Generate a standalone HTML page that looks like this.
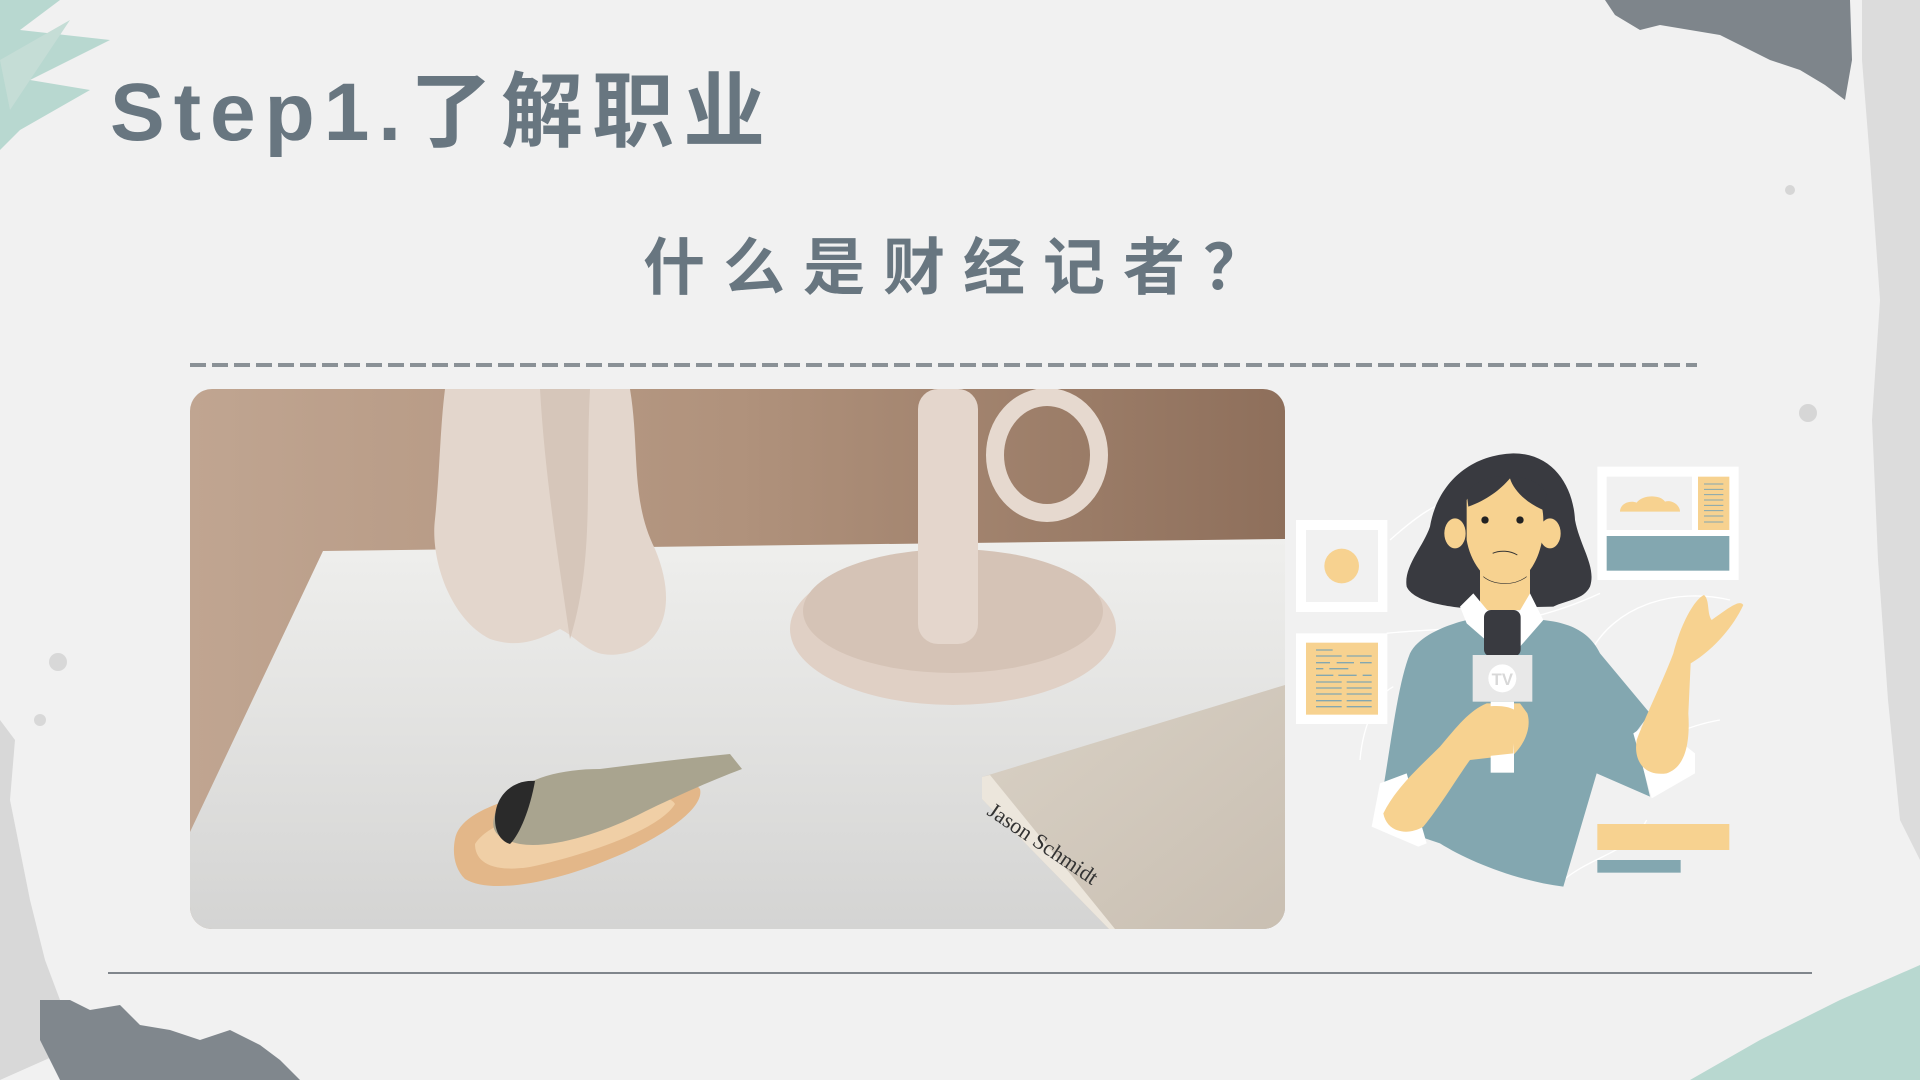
<!DOCTYPE html>
<html><head><meta charset="utf-8"><style>
html,body{margin:0;padding:0}
body{width:1920px;height:1080px;background:#f1f1f1;position:relative;overflow:hidden;font-family:"Liberation Sans","Noto Sans CJK SC",sans-serif}
.abs{position:absolute}
#title{left:110px;top:58px;font-size:82px;font-weight:bold;letter-spacing:9px;color:#687680;white-space:nowrap;line-height:110px}
#sub{left:643px;top:222px;font-size:62px;font-weight:bold;letter-spacing:18px;color:#687680;white-space:nowrap;line-height:80px;font-family:"Noto Sans CJK SC",sans-serif}
#dash{left:190px;top:363px;width:1507px;height:4px;background:repeating-linear-gradient(90deg,#8a9196 0 16px,transparent 16px 22px)}
#line{left:108px;top:972px;width:1704px;height:2px;background:#80868c}
#photo{left:190px;top:389px;width:1095px;height:540px;border-radius:22px;overflow:hidden}
</style></head><body>
<svg class="abs" style="left:0;top:0" width="1920" height="1080" viewBox="0 0 1920 1080">
  <path d="M0,0 L60,0 L20,30 L110,40 L30,80 L90,90 L20,130 L0,150Z" fill="#b8d8d0"/>
  <path d="M0,60 L70,20 L10,110Z" fill="#c5ddd6"/>
  <path d="M1862,0 L1920,0 L1920,860 L1900,820 L1888,700 L1878,560 L1872,420 L1880,300 L1870,160 L1862,60Z" fill="#dcdcdc"/>
  <path d="M1605,0 L1850,0 L1852,60 L1845,100 L1825,85 L1800,70 L1770,60 L1740,45 L1720,35 L1690,30 L1660,25 L1640,30 L1615,15Z" fill="#7e858b"/>
  <circle cx="1808" cy="413" r="9" fill="#d6d6d6"/>
  <circle cx="1790" cy="190" r="5" fill="#d6d6d6"/>
  <path d="M0,720 L15,740 L10,800 L20,850 L30,900 L45,960 L60,1000 L90,1040 L0,1080Z" fill="#d8d8d8"/>
  <circle cx="58" cy="662" r="9" fill="#d8d8d8"/>
  <circle cx="40" cy="720" r="6" fill="#d8d8d8"/>
  <path d="M40,1000 L70,1000 L90,1010 L120,1005 L140,1025 L170,1030 L200,1040 L230,1030 L260,1045 L280,1060 L300,1080 L60,1080 L40,1040Z" fill="#80878d"/>
  <path d="M1690,1080 L1760,1040 L1840,1000 L1920,965 L1920,1080Z" fill="#b8d8d0"/>
</svg>

<div id="title" class="abs">Step1.了解职业</div>
<div id="sub" class="abs">什么是财经记者？</div>
<div id="dash" class="abs"></div>

<div id="photo" class="abs">
<svg width="1095" height="540" viewBox="0 0 1095 540">
  <defs>
    <linearGradient id="wall" x1="0" y1="0" x2="1" y2="0">
      <stop offset="0" stop-color="#c0a591"/><stop offset="0.5" stop-color="#b0927c"/><stop offset="1" stop-color="#8e6f5b"/>
    </linearGradient>
    <linearGradient id="tab" x1="0" y1="0" x2="0" y2="1">
      <stop offset="0" stop-color="#efefed"/><stop offset="1" stop-color="#d4d4d3"/>
    </linearGradient>
    <linearGradient id="book" x1="0" y1="0" x2="1" y2="1">
      <stop offset="0" stop-color="#d9d1c5"/><stop offset="1" stop-color="#c9bfb2"/>
    </linearGradient>
  </defs>
  <rect width="1095" height="540" fill="url(#wall)"/>
  <path d="M133,162 L1095,150 L1095,540 L0,540 L0,443Z" fill="url(#tab)"/>
  <path d="M255,0 L440,0 C450,60 440,110 465,160 C490,220 470,260 430,265 C400,270 390,250 370,240 C350,250 330,260 300,250 C260,230 240,170 245,130 C250,80 250,40 255,0Z" fill="#e3d6cc"/>
  <path d="M350,0 L400,0 C395,90 405,170 380,250 C370,180 355,90 350,0Z" fill="#d6c6ba"/>
  <ellipse cx="763" cy="240" rx="163" ry="76" fill="#e0d0c5"/>
  <ellipse cx="763" cy="222" rx="150" ry="62" fill="#d5c3b6"/>
  <rect x="728" y="0" width="60" height="255" rx="20" fill="#e4d6cc"/>
  <ellipse cx="857" cy="66" rx="52" ry="58" fill="none" stroke="#e6d9cf" stroke-width="18"/>
  <path d="M792,388 L1095,296 L1095,540 L919,540 L792,410Z" fill="url(#book)"/>
  <path d="M792,388 L800,386 L925,540 L919,540 L792,410Z" fill="#ece6dc"/>
  <text x="0" y="0" transform="translate(796,425) rotate(34)" font-family="Liberation Serif,serif" font-size="22" fill="#333">Jason Schmidt</text>
  <path d="M265,450 C270,420 330,405 390,395 C440,388 500,385 510,400 C515,420 470,450 420,470 C360,495 300,505 275,490 C265,480 262,465 265,450Z" fill="#e3b789"/>
  <path d="M285,455 C300,430 360,418 410,410 C450,405 480,405 485,415 C470,440 400,465 340,478 C300,484 285,472 285,455Z" fill="#f0cfa6"/>
  <path d="M305,425 C320,395 360,380 410,380 C450,375 490,370 540,365 L552,380 C520,392 480,410 450,425 C410,445 360,460 330,455 C305,450 300,440 305,425Z" fill="#a9a48f"/>
  <path d="M305,430 C305,405 325,390 345,392 C340,420 330,445 320,455 C310,452 305,442 305,430Z" fill="#2a2a2a"/>
</svg>
</div>

<div id="line" class="abs"></div>

<svg class="abs" style="left:1280px;top:420px" width="480" height="480" viewBox="0 0 1440 1440">
  <g fill="none" stroke="#fff" stroke-width="4">
    <path d="M330,360 C420,280 470,250 520,240"/>
    <path d="M320,640 C500,620 700,640 960,520"/>
    <path d="M930,700 C1000,560 1180,500 1350,540"/>
    <path d="M970,1050 C1100,980 1200,920 1320,900"/>
    <path d="M850,1380 C950,1300 1050,1300 1100,1200"/>
    <path d="M240,1020 C250,900 300,820 340,800"/>
  </g>
  <rect x="48" y="300" width="274" height="276" fill="#fff"/>
  <rect x="78" y="330" width="216" height="216" fill="#f1f1f1"/>
  <circle cx="185" cy="438" r="52" fill="#f7d290"/>
  <rect x="48" y="640" width="274" height="272" fill="#fff"/>
  <rect x="78" y="668" width="216" height="216" fill="#f7d290"/>
  <g stroke="#83a7b0" stroke-width="4">
    <path d="M108,690 H158 M108,708 H185 M200,708 H275 M108,728 H150 M170,728 H222 M240,728 H275 M108,746 H130 M148,746 H205 M108,766 H160 M175,766 H230 M248,766 H275 M108,786 H185 M200,786 H275 M108,804 H185 M200,804 H275 M108,822 H185 M200,822 H275 M108,842 H185 M200,842 H275 M108,860 H185 M200,860 H275"/>
  </g>
  <rect x="952" y="140" width="424" height="340" fill="#fff"/>
  <rect x="980" y="170" width="256" height="160" fill="#f1f1f1"/>
  <path d="M1020,275 C1020,250 1050,240 1070,248 C1085,225 1140,222 1155,245 C1175,238 1200,255 1200,275Z" fill="#f7d290"/>
  <rect x="1254" y="170" width="94" height="160" fill="#f7d290"/>
  <g stroke="#83a7b0" stroke-width="3"><path d="M1272,192 H1330 M1272,208 H1330 M1272,224 H1330 M1272,240 H1330 M1272,256 H1330 M1272,272 H1330 M1272,288 H1330 M1272,306 H1330"/></g>
  <rect x="980" y="348" width="368" height="104" fill="#83a7b0"/>
  <rect x="952" y="1212" width="396" height="78" fill="#f7d290"/>
  <rect x="952" y="1320" width="250" height="38" fill="#83a7b0"/>
  <!-- hair -->
  <path d="M380,500 C370,440 430,380 450,320 C470,200 560,105 700,100 C820,100 880,200 885,300 C900,380 950,440 930,500 C910,540 860,540 820,560 L560,565 C500,560 400,545 380,500Z" fill="#393a40"/>
  <rect x="600" y="420" width="150" height="150" fill="#f7d290"/>
  <ellipse cx="525" cy="340" rx="32" ry="45" fill="#f7d290"/>
  <ellipse cx="810" cy="340" rx="32" ry="45" fill="#f7d290"/>
  <path d="M560,240 C580,200 640,180 690,175 C760,185 790,240 790,300 C795,380 760,480 680,498 C610,490 570,420 560,360Z" fill="#f7d290"/>
  <path d="M565,260 C620,240 660,210 690,175 C700,210 740,250 790,270 L800,220 C760,150 600,150 560,220Z" fill="#393a40"/>
  <circle cx="615" cy="300" r="11" fill="#222"/>
  <circle cx="720" cy="300" r="11" fill="#222"/>
  <path d="M638,400 C660,390 690,392 712,405" stroke="#333" stroke-width="3" fill="none"/>
  <path d="M610,470 C640,495 700,500 740,470" stroke="#333" stroke-width="2" fill="none"/>
  <path d="M390,700 C420,640 520,610 560,600 L790,600 C880,610 930,640 960,700 L1110,880 L1065,940 L1110,1130 L950,1060 L850,1400 C700,1380 560,1320 480,1270 L420,1250 L300,1160 C330,1000 350,800 390,700Z" fill="#83a7b0"/>
  <path d="M540,560 L580,520 L680,640 L750,520 L790,600 L720,680 L640,680 L560,610Z" fill="#fff"/>
  <path d="M275,1220 L300,1090 L380,1060 L440,1270 L415,1280Z" fill="#fff"/>
  <path d="M1060,940 L1120,900 L1245,1000 L1245,1060 L1115,1135Z" fill="#fff"/>
  <path d="M1070,960 C1060,1020 1090,1070 1160,1060 C1220,1040 1230,960 1225,880 L1232,730 C1300,690 1360,620 1390,555 C1380,538 1350,560 1295,600 C1280,580 1290,540 1272,525 C1240,540 1200,620 1180,700 C1150,780 1100,880 1070,960Z" fill="#f7d290"/>
  <path d="M310,1180 C320,1235 380,1250 430,1220 C480,1160 540,1060 570,1020 L700,1005 C745,960 752,910 742,880 L720,850 L620,850 C570,870 530,920 480,980 C420,1040 350,1100 310,1180Z" fill="#f7d290"/>
  <rect x="632" y="845" width="70" height="213" fill="#fff"/>
  <rect x="612" y="570" width="110" height="140" rx="22" fill="#393a40"/>
  <rect x="578" y="705" width="179" height="140" fill="#e8e8e8"/>
  <circle cx="667" cy="775" r="42" fill="#fff"/>
  <text x="667" y="795" text-anchor="middle" font-family="Liberation Sans,sans-serif" font-weight="bold" font-size="50" fill="#d8d8d8">TV</text>
  <path d="M620,860 C700,850 730,880 745,920 C730,935 715,930 705,925 L700,1000 L610,1010 C590,950 590,890 620,860Z" fill="#f7d290"/>
</svg>
</body></html>
